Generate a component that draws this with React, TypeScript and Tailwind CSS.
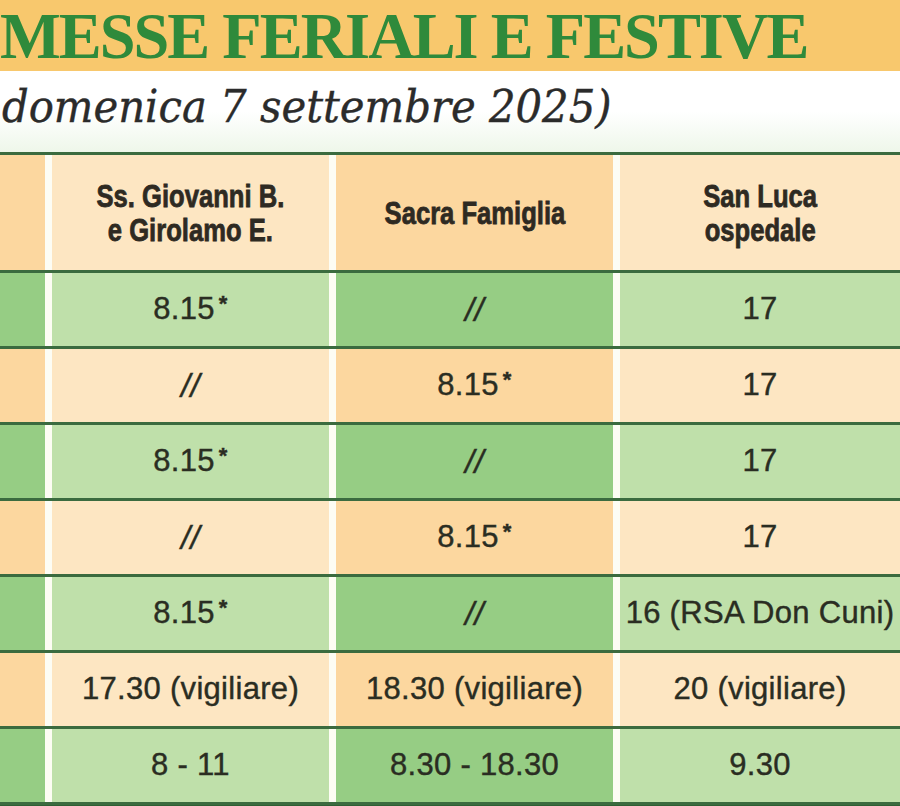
import React from 'react';

type Row = { tone: 'green' | 'orange'; cells: string[] };

const ROWS: Row[] = [
  { tone: 'green', cells: ['8.15*', '//', '17'] },
  { tone: 'orange', cells: ['//', '8.15*', '17'] },
  { tone: 'green', cells: ['8.15*', '//', '17'] },
  { tone: 'orange', cells: ['//', '8.15*', '17'] },
  { tone: 'green', cells: ['8.15*', '//', '16 (RSA Don Cuni)'] },
  { tone: 'orange', cells: ['17.30 (vigiliare)', '18.30 (vigiliare)', '20 (vigiliare)'] },
  { tone: 'green', cells: ['8 - 11', '8.30 - 18.30', '9.30'] },
];

// colonne dispari più scure, pari più chiare
const TONES = {
  green: { dark: 'bg-[#96cd84]', light: 'bg-[#bfe0aa]' },
  orange: { dark: 'bg-[#fcd79f]', light: 'bg-[#fde6c2]' },
};

function CellText({ value }: { value: string }) {
  if (value.endsWith('*')) {
    return (
      <span>
        {value.slice(0, -1)}
        <span className="relative -top-[8px] ml-[4px] text-[22px] font-bold">*</span>
      </span>
    );
  }
  if (value === '//') return <span className="italic text-[33px]">//</span>;
  return <span>{value}</span>;
}

function HeadText({ lines }: { lines: string[] }) {
  return (
    <span className="inline-block scale-x-[0.8] font-bold leading-[34px] text-[32px] text-[#2e2a22] [-webkit-text-stroke:0.8px_#2e2a22]">
      {lines.map((l) => (
        <span key={l} className="block whitespace-nowrap">
          {l}
        </span>
      ))}
    </span>
  );
}

export default function App() {
  return (
    <div className="w-[900px] h-[806px] overflow-hidden bg-white font-['Liberation_Sans',Arial,sans-serif]">
      {/* ── Titolo ─────────────────────────────────────────── */}
      <div className="h-[71px] bg-[#f8c86d] flex items-start">
        <span className="inline-block origin-left scale-x-[0.99] tracking-[-2px] whitespace-nowrap font-['Liberation_Serif',serif] font-bold text-[65px] leading-[72px] text-[#2f8a3b]">
          MESSE FERIALI E FESTIVE
        </span>
      </div>

      {/* ── Sottotitolo ────────────────────────────────────── */}
      <div className="h-[81px] bg-gradient-to-b from-white via-white to-[#eef7ea] flex items-center pb-[10px]">
        <span className="whitespace-nowrap font-['DejaVu_Serif',serif] italic text-[44px] leading-none text-[#2b2b2b] pl-[2px] scale-x-[0.95] origin-left inline-block [-webkit-text-stroke:0.4px_#2b2b2b]">
          domenica 7 settembre 2025)
        </span>
      </div>

      {/* ── Tabella ────────────────────────────────────────── */}
      <div className="border-t-[3px] border-[#3b6b3f]">
        {/* intestazione */}
        <div className="grid grid-cols-[45px_277px_277px_1fr] gap-x-[7px] bg-[#fdfdf4] h-[118px] border-b-[3px] border-[#3b6b3f]">
          <div className="bg-[#fcd79f]" />
          <div className="bg-[#fde6c2] flex items-center justify-center text-center">
            <HeadText lines={['Ss. Giovanni B.', 'e Girolamo E.']} />
          </div>
          <div className="bg-[#fcd79f] flex items-center justify-center text-center">
            <HeadText lines={['Sacra Famiglia']} />
          </div>
          <div className="bg-[#fde6c2] flex items-center justify-center text-center">
            <HeadText lines={['San Luca', 'ospedale']} />
          </div>
        </div>

        {ROWS.map((row, i) => {
          const t = TONES[row.tone];
          return (
            <div
              key={i}
              className="grid grid-cols-[45px_277px_277px_1fr] gap-x-[7px] bg-[#fdfdf4] h-[76px] border-b-[3px] border-[#3b6b3f] text-[31px] tracking-[0.3px] text-[#2a2d22] [-webkit-text-stroke:0.4px_#2a2d22]"
            >
              <div className={t.dark} />
              <div className={`${t.light} flex items-center justify-center whitespace-nowrap`}>
                <CellText value={row.cells[0]} />
              </div>
              <div className={`${t.dark} flex items-center justify-center whitespace-nowrap`}>
                <CellText value={row.cells[1]} />
              </div>
              <div className={`${t.light} flex items-center justify-center whitespace-nowrap`}>
                <CellText value={row.cells[2]} />
              </div>
            </div>
          );
        })}
        <div className="h-[8px] bg-[#2f5f34]" />
      </div>
    </div>
  );
}
